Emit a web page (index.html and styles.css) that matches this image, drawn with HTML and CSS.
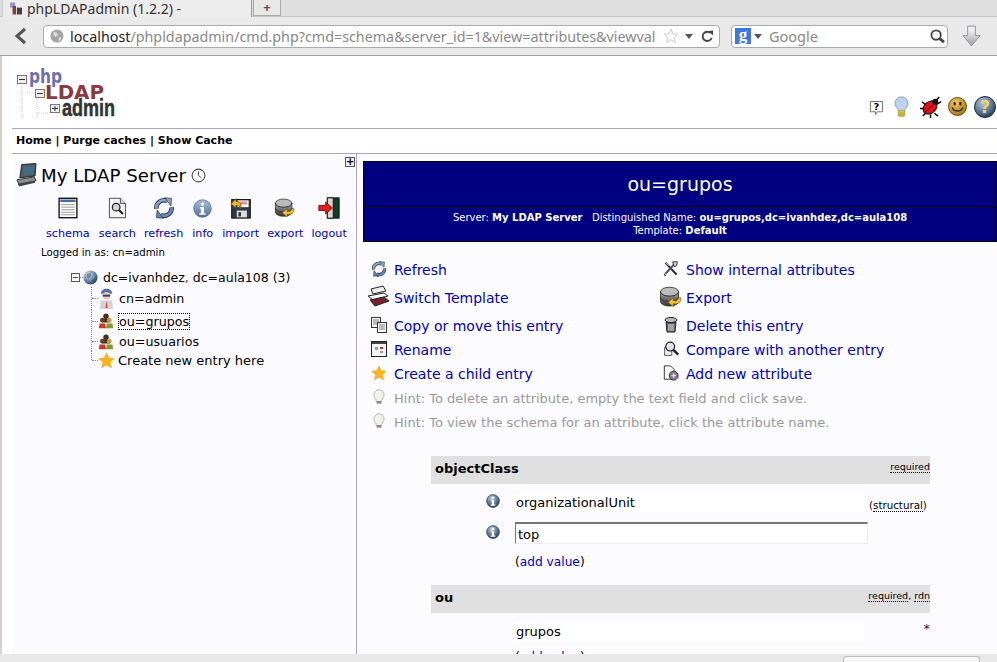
FILE: index.html
```html
<!DOCTYPE html>
<html lang="en">
<head>
    <meta charset="UTF-8">
    <meta name="viewport" content="width=device-width, initial-scale=1.0">
    <title>phpLDAPadmin (1.2.2)</title>
    <link rel="stylesheet" href="styles.css">
</head>
<body>
    <svg class="defs" width="0" height="0">
        <defs>
            <linearGradient id="g-steel" x1="0" y1="0" x2="0" y2="1"><stop offset="0" stop-color="#a9c0dc"/><stop offset="1" stop-color="#4f6f98"/></linearGradient>
            <linearGradient id="g-disk" x1="0" y1="0" x2="0" y2="1"><stop offset="0" stop-color="#aaa"/><stop offset="1" stop-color="#333"/></linearGradient>
            <linearGradient id="g-arrow" x1="0" y1="1" x2="0" y2="0"><stop offset="0" stop-color="#9a9ea2"/><stop offset=".8" stop-color="#eef1f1"/></linearGradient>
            <radialGradient id="g-globe" cx=".35" cy=".3" r=".8"><stop offset="0" stop-color="#dfeaf5"/><stop offset=".6" stop-color="#5c7fa8"/><stop offset="1" stop-color="#1d3352"/></radialGradient>
            <radialGradient id="g-smile" cx=".4" cy=".3" r=".8"><stop offset="0" stop-color="#f5c65a"/><stop offset="1" stop-color="#a06c10"/></radialGradient>
            <radialGradient id="g-dark" cx=".4" cy=".3" r=".8"><stop offset="0" stop-color="#b8cbe0"/><stop offset=".7" stop-color="#44607f"/><stop offset="1" stop-color="#16243a"/></radialGradient>
            <symbol id="i-info" viewBox="0 0 24 24"><circle cx="12" cy="12" r="11" fill="url(#g-steel)" stroke="#51688a"/><circle cx="12" cy="6.500" r="2" fill="#fff"/><path d="M9 10h5v8h2v2H8v-2h2v-6H9z" fill="#fff"/></symbol>
            <symbol id="i-info-dark" viewBox="0 0 24 24"><circle cx="12" cy="12" r="11" fill="url(#g-dark)" stroke="#223"/><circle cx="12" cy="6.500" r="2.200" fill="#fff"/><path d="M9 10h5v8h2v2H8v-2h2v-6H9z" fill="#fff"/></symbol>
            <symbol id="i-refresh" viewBox="0 0 32 32">
                <path d="M5 17A11 11 0 0 1 21 6" fill="none" stroke="#1d2a3c" stroke-width="6.500"/>
                <path d="M5 17A11 11 0 0 1 21 6" fill="none" stroke="#8aa6cc" stroke-width="4"/>
                <path d="M17 1l10 1-1 11z" fill="#8aa6cc" stroke="#1d2a3c"/>
                <path d="M27 15A11 11 0 0 1 11 26" fill="none" stroke="#1d2a3c" stroke-width="6.500"/>
                <path d="M27 15A11 11 0 0 1 11 26" fill="none" stroke="#6a8cb8" stroke-width="4"/>
                <path d="M15 31L5 30l1-11z" fill="#6a8cb8" stroke="#1d2a3c"/>
            </symbol>
            <symbol id="i-disk" viewBox="0 0 32 32"><ellipse cx="14" cy="9" rx="12" ry="6" fill="#bbb" stroke="#222"/><path d="M2 9v13c0 3 5 6 12 6s12-3 12-6V9c0 3-5 6-12 6S2 12 2 9z" fill="url(#g-disk)" stroke="#222"/><path d="M2 16c0 3 5 6 12 6s12-3 12-6" fill="none" stroke="#222"/><path d="M29 17c1 6-4 9-10 8v4l-7-6 7-6v4c4 1 7-1 7-4z" fill="#f1c33c" stroke="#7a5a08"/></symbol>
            <symbol id="i-star" viewBox="0 0 24 24"><path d="M12 1l3.300 7.400 7.700.8-5.800 5.300 1.700 7.900L12 18.300l-6.900 4.100 1.700-7.900L1 9.200l7.700-.8z" fill="#f8b419" stroke="#e5a010" stroke-width=".6"/></symbol>
            <symbol id="i-bulb" viewBox="0 0 20 24"><path d="M10 1a8 8 0 0 0-5 14c1 1 1 3 1 4h8c0-1 0-3 1-4a8 8 0 0 0-5-14z" fill="#f1f1ea" stroke="#999"/><rect x="6.500" y="18" width="7" height="4" fill="#888"/></symbol>
            <symbol id="i-group" viewBox="0 0 20 20"><circle cx="10" cy="4" r="3.400" fill="#4a2e1a"/><path d="M5 12l2-5h6l2 5z" fill="#2e2e2e"/><circle cx="5.500" cy="9" r="3" fill="#6b3b1c"/><path d="M1 19l1-6h7l1 6z" fill="#c93a20"/><circle cx="14" cy="9" r="3" fill="#c89a3a"/><path d="M10 19l1-6h7l1 6z" fill="#7f9a26"/></symbol>
        </defs>
    </svg>

    <div class="tabstrip">
        <div class="tab">
            <svg class="favicon" viewBox="0 0 14 16"><rect x="0" y="1" width="6" height="6" fill="#9a9ac8"/><rect x="3" y="5" width="4" height="10" fill="#8a3a3f"/><rect x="8" y="7" width="6" height="8" fill="#444"/></svg>
            <span>phpLDAPadmin (1.2.2) -</span>
        </div>
        <div class="newtab">+</div>
    </div>
    <div class="toolbar">
        <svg class="back" viewBox="0 0 14 18"><path d="M11 2L3 9l8 7" fill="none" stroke="#555" stroke-width="3"/></svg>
        <div class="urlbar">
            <svg class="urlglobe" viewBox="0 0 16 16"><circle cx="8" cy="8" r="7.500" fill="#a5a5a5"/><path d="M4 3l4 1 1 3-3 2-2-2zM10 10l3-1-1 4-2 1z" fill="#dcdcdc"/></svg>
            <div class="url"><span class="host">localhost</span>/phpldapadmin/cmd.php?cmd=schema&amp;server_id=1&amp;view=attributes&amp;viewval</div>
            <svg class="urlstar" viewBox="0 0 16 16"><path d="M8 1l2 4.800 5 .4-3.800 3.300 1.200 5L8 11.800 3.600 14.500l1.200-5L1 6.200l5-.4z" fill="#fff" stroke="#ccc"/></svg>
            <div class="caret"></div>
            <svg class="reload" viewBox="0 0 14 14"><path d="M11.500 8.500A5 5 0 1 1 10.500 3.500" fill="none" stroke="#444" stroke-width="2"/><path d="M8 1l5-.5V6z" fill="#444"/></svg>
        </div>
        <div class="searchbar">
            <div class="gbox">g</div>
            <div class="caret"></div>
            <div class="placeholder">Google</div>
            <svg class="glass" viewBox="0 0 16 16"><circle cx="6.500" cy="6.500" r="5" fill="none" stroke="#444" stroke-width="2"/><path d="M10 10l5 4" stroke="#444" stroke-width="3"/></svg>
        </div>
        <svg class="download" viewBox="0 0 20 24"><path d="M6 1h8v10h5l-9 11-9-11h5z" fill="url(#g-arrow)" stroke="#8e9698"/></svg>
    </div>

    <div class="page">
        <header class="head">
            <svg class="logo" viewBox="0 0 110 50" width="110" height="50">
                <path d="M5 12v36M19 27h4M20 27v20M20 42h13M10 22h8" stroke="#ccc" stroke-dasharray="1 1" fill="none"/>
                <rect x=".5" y="4.500" width="9" height="8" fill="#eee" stroke="#777"/><path d="M2 8.500h6" stroke="#333"/>
                <rect x="18.500" y="18.500" width="9" height="8" fill="#eee" stroke="#777"/><path d="M20 22.500h6" stroke="#333"/>
                <rect x="33.500" y="33.500" width="9" height="8" fill="#eee" stroke="#777"/><path d="M35 37.500h6M38 35v5" stroke="#333"/>
                <text x="12" y="12" class="logo-php" textLength="33" lengthAdjust="spacingAndGlyphs">php</text>
                <text x="28" y="28" class="logo-ldap" textLength="59" lengthAdjust="spacingAndGlyphs">LDAP</text>
                <text x="45" y="45" class="logo-admin" textLength="53" lengthAdjust="spacingAndGlyphs">admin</text>
            </svg>
            <div class="head-icons">
                <svg class="hi-bubble" viewBox="0 0 16 18"><path d="M1.500 1.500h13v11H9l-2 3v-3H1.500z" fill="#fff" stroke="#666"/><text x="8" y="10.500" class="bubble-q">?</text></svg>
                <svg class="hi-bulb" viewBox="0 0 16 24"><path d="M8 1a7 7 0 0 0-5 12c1 1 2 2 2 4h6c0-2 1-3 2-4A7 7 0 0 0 8 1z" fill="#bcd4ee" stroke="#7e9ec4"/><rect x="4.500" y="16" width="7" height="6" rx="1" fill="#e6d360" stroke="#a99720"/><path d="M5 18.500h6M5 20.500h6" stroke="#a99720"/></svg>
                <svg class="hi-bug" viewBox="0 0 24 24"><path d="M3 7l5 4M1 14h6M4 22l5-5M21 2l-5 6M23 7l-5 3M16 19l4 3M12 20v4" stroke="#000" stroke-width="1.500"/><ellipse cx="11.500" cy="13" rx="8" ry="6" fill="#e0101c" stroke="#000" transform="rotate(-40 11.500 13)"/><path d="M6 18L17 8" stroke="#600"/><circle cx="17" cy="7" r="3" fill="#111"/></svg>
                <svg class="hi-round" viewBox="0 0 20 20"><circle cx="10" cy="10" r="9.500" fill="url(#g-smile)" stroke="#6b4a0c"/><ellipse cx="7" cy="7" rx="1.200" ry="2" fill="#222"/><ellipse cx="13" cy="7" rx="1.200" ry="2" fill="#222"/><path d="M4.500 11c1 5 10 5 11 0" fill="none" stroke="#222" stroke-width="1.300"/></svg>
                <svg class="hi-help" viewBox="0 0 22 22"><circle cx="11" cy="11" r="10.500" fill="url(#g-dark)" stroke="#1b2b40"/><text x="11" y="17" class="help-q">?</text></svg>
            </div>
        </header>
        <nav class="topnav">Home | Purge caches | Show Cache</nav>

        <main class="main">
            <aside class="side">
                <div class="side-expand"><span class="plusbox">+</span></div>
                <div class="server-row">
                    <svg class="server-ic" viewBox="0 0 22 24"><path d="M6 1l15-1-1 13-16 2z" fill="#54585e" stroke="#222"/><path d="M8 3l11-1-1 9-11 1z" fill="#3e6f86"/><path d="M1 17l18-3 2 4-18 4z" fill="#8b8f92" stroke="#333"/><path d="M2 21l18-3v2L3 24z" fill="#444"/></svg>
                    <h2 class="server-name">My LDAP Server</h2>
                    <svg class="clock" viewBox="0 0 16 16"><circle cx="8" cy="8" r="6.800" fill="#fff" stroke="#444" stroke-width="1.100"/><path d="M8 3.500V8l3 2.500" fill="none" stroke="#444"/></svg>
                </div>
                <div class="tools">
                    <a class="tool tool-schema"><svg viewBox="0 0 24 26"><rect x="1.500" y="1.500" width="21" height="23" fill="#fff" stroke="#000" stroke-width="1.500"/><rect x="3" y="3" width="18" height="3" fill="#4a6a9a"/><path d="M4 9h16M4 12h16M4 15h16M4 18h16M4 21h16" stroke="#888"/></svg><span>schema</span></a>
                    <a class="tool tool-search"><svg viewBox="0 0 24 26"><path d="M3 1.500h13l6 6v17H3z" fill="#f4f4f4" stroke="#333"/><path d="M16 1.500v6h6" fill="#ddd" stroke="#333"/><circle cx="11" cy="12" r="4.500" fill="#cfd8e2" stroke="#222" stroke-width="1.500"/><path d="M14 15l5 5" stroke="#222" stroke-width="2.500"/></svg><span>search</span></a>
                    <a class="tool tool-refresh"><svg viewBox="0 0 32 32"><use href="#i-refresh"/></svg><span>refresh</span></a>
                    <a class="tool tool-info"><svg viewBox="0 0 24 24"><use href="#i-info"/></svg><span>info</span></a>
                    <a class="tool tool-import"><svg viewBox="0 0 26 26"><rect x="2" y="3" width="22" height="22" fill="#2f3a48" stroke="#000"/><rect x="9" y="4" width="13" height="8" fill="#fff"/><path d="M11 6h9M11 8h9" stroke="#c33"/><rect x="8" y="16" width="12" height="8" fill="#ddd"/><rect x="10" y="18" width="3" height="5" fill="#333"/><path d="M1 8l6-6v3c4 0 7 3 6 9-1-3-3-4-6-4v3z" fill="#e8b830" stroke="#6b5008"/></svg><span>import</span></a>
                    <a class="tool tool-export"><svg viewBox="0 0 32 32"><use href="#i-disk"/></svg><span>export</span></a>
                    <a class="tool tool-logout"><svg viewBox="0 0 26 26"><rect x="11" y="1" width="14" height="24" fill="#123c2a" stroke="#000"/><path d="M11 1h7v24h-7z" fill="#d8d8c8" stroke="#000"/><path d="M1 10h8V6l8 7-8 7v-4H1z" fill="#e02020" stroke="#700"/></svg><span>logout</span></a>
                </div>
                <p class="logged">Logged in as: cn=admin</p>
                <div class="tree">
                    <div class="tree-root">
                        <span class="minusbox"></span><span class="root-joint"></span>
                        <svg class="globe" viewBox="0 0 16 16"><circle cx="8" cy="8" r="7.500" fill="url(#g-globe)"/><path d="M4 4l4-1 1 3-3 3-2-1zM10 10l3-1-1 3-2 1z" fill="#2c4a30" opacity=".5"/></svg>
                        <span class="root-label">dc=ivanhdez<i class="comma">,</i> dc=aula108 (3)</span>
                    </div>
                    <ul class="tree-list">
                        <li class="tree-item item-a"><span class="joint"></span><svg class="node-ic user-ic" viewBox="0 0 18 22"><path d="M3 6c0-7 12-7 12 0z" fill="#4f6fb0"/><circle cx="9" cy="8" r="4" fill="#f0c8a8"/><path d="M5 7h8v2H5z" fill="#2f3f70"/><path d="M2 22l1-9h12l1 9z" fill="#d4d4d4"/><path d="M9 13l-1 8h2z" fill="#c33"/></svg><span>cn=admin</span></li>
                        <li class="tree-item item-b"><span class="joint"></span><svg class="node-ic" viewBox="0 0 20 20"><use href="#i-group"/></svg><span class="focused">ou=grupos</span></li>
                        <li class="tree-item item-c"><span class="joint"></span><svg class="node-ic" viewBox="0 0 20 20"><use href="#i-group"/></svg><span>ou=usuarios</span></li>
                        <li class="tree-item item-d"><span class="joint"></span><svg class="node-ic star-ic" viewBox="0 0 24 24"><use href="#i-star"/></svg><span class="create-label">Create new entry here</span></li>
                    </ul>
                </div>
            </aside>

            <section class="content">
                <div class="entry-head">
                    <div class="entry-title">ou=grupos</div>
                    <div class="entry-sub">
                        <div>Server: <b>My LDAP Server</b> &nbsp; Distinguished Name: <b>ou=grupos,dc=ivanhdez,dc=aula108</b></div>
                        <div>Template: <b>Default</b></div>
                    </div>
                </div>

                <div class="actions">
                    <a class="action"><span class="a-ic"><svg class="s16" viewBox="0 0 32 32"><use href="#i-refresh"/></svg></span>Refresh</a>
                    <a class="action"><span class="a-ic"><svg class="s16" viewBox="0 0 20 20"><path d="M3 2l14 15" stroke="#222" stroke-width="2.600"/><path d="M3 2l4 4" stroke="#eee" stroke-width="1"/><path d="M15 3L3 16" stroke="#555" stroke-width="2.600"/><path d="M12 1l6 0-1 5-3 1z" fill="#ccc" stroke="#222"/><path d="M1 15l3 3 -2 1z" fill="#222"/></svg></span>Show internal attributes</a>

                    <a class="action"><span class="a-ic"><svg class="s24" viewBox="0 0 24 24"><path d="M4 4l12-3 3 5-13 3z" fill="#eee" stroke="#222"/><path d="M1 11l16-3 4 3-15 4z" fill="#fff" stroke="#222"/><path d="M3 15l14-3 5 4-14 5z" fill="#7d1f2a" stroke="#222"/></svg></span>Switch Template</a>
                    <a class="action"><span class="a-ic"><svg class="s24" viewBox="0 0 32 32"><use href="#i-disk"/></svg></span>Export</a>

                    <a class="action"><span class="a-ic"><svg class="s16" viewBox="0 0 16 16"><rect x=".5" y=".5" width="9" height="10" fill="#fff" stroke="#333"/><path d="M2 3h6M2 5h6M2 7h6" stroke="#777"/><rect x="6.500" y="5.500" width="9" height="10" fill="#fff" stroke="#333"/><path d="M8 8h6M8 10h6M8 12h6" stroke="#777"/></svg></span>Copy or move this entry</a>
                    <a class="action"><span class="a-ic"><svg class="s16" viewBox="0 0 16 16"><ellipse cx="8" cy="3" rx="6" ry="2.500" fill="#bbb" stroke="#222"/><path d="M3 5l1 10h8l1-10c-2 1-8 1-10 0z" fill="#666" stroke="#222"/><path d="M6 7v7M8 7v7M10 7v7" stroke="#ddd"/></svg></span>Delete this entry</a>

                    <a class="action"><span class="a-ic"><svg class="s16 rename-ic" viewBox="0 0 16 16"><rect x=".5" y=".5" width="15" height="15" fill="#f4f4f4" stroke="#222"/><rect x="1" y="1" width="14" height="2" fill="#444"/><path d="M4 6h3v3H4zM9 10h3v2H9z" fill="#999"/><path d="M9 6h3v2H9z" fill="#c33"/></svg></span>Rename</a>
                    <a class="action"><span class="a-ic"><svg class="s16" viewBox="0 0 20 20"><path d="M2 8v10h9V8z" fill="#eee" stroke="#333"/><circle cx="9" cy="7" r="5.500" fill="#dfe6ee" stroke="#222" stroke-width="1.500"/><path d="M13 11l6 6" stroke="#222" stroke-width="3"/></svg></span>Compare with another entry</a>

                    <a class="action"><span class="a-ic"><svg class="s16" viewBox="0 0 24 24"><use href="#i-star"/></svg></span>Create a child entry</a>
                    <a class="action"><span class="a-ic"><svg class="s16" viewBox="0 0 18 18"><path d="M1.500 1h7l4 4v11h-11z" fill="#fff" stroke="#222"/><circle cx="12" cy="12" r="5" fill="#8a7a9a" stroke="#222"/><path d="M12 9.500v5M9.500 12h5" stroke="#fff"/></svg></span>Add new attribute</a>

                    <div class="hint"><span class="a-ic"><svg class="s16" viewBox="0 0 20 24"><use href="#i-bulb"/></svg></span>Hint: To delete an attribute, empty the text field and click save.</div>
                    <div class="hint"><span class="a-ic"><svg class="s16" viewBox="0 0 20 24"><use href="#i-bulb"/></svg></span>Hint: To view the schema for an attribute, click the attribute name.</div>
                </div>

                <div class="attrs">
                    <div class="attr-head">
                        <span class="attr-name">objectClass</span>
                        <span class="attr-flags"><u>required</u></span>
                    </div>
                    <div class="value-row first">
                        <svg class="val-info" viewBox="0 0 24 24"><use href="#i-info-dark"/></svg>
                        <div class="value">organizationalUnit</div>
                        <span class="value-note">(<u>structural</u>)</span>
                    </div>
                    <div class="value-row second">
                        <svg class="val-info" viewBox="0 0 24 24"><use href="#i-info-dark"/></svg>
                        <div class="value editing">top</div>
                    </div>
                    <div class="add-value">(<a>add value</a>)</div>

                    <div class="attr-head">
                        <span class="attr-name">ou</span>
                        <span class="attr-flags"><u>required</u>, <u>rdn</u></span>
                    </div>
                    <div class="value-row first plain">
                        <div class="value">grupos</div>
                        <span class="value-star">*</span>
                    </div>
                    <div class="add-value">(<a>add value</a>)</div>
                </div>
            </section>
        </main>
    </div>

    <div class="statusbar"><div class="status-box"></div></div>
</body>
</html>
```

FILE: styles.css
```css
html, body {
    height: 100%;
}
body {
    margin: 0;
    height: 662px;
    overflow: hidden;
    display: flex;
    flex-direction: column;
    font-family: "DejaVu Sans", sans-serif;
    background-color: #fff;
    color: #000;
}
.defs {
    display: block;
    height: 0;
}
svg {
    display: block;
    flex: none;
}
a {
    color: #0000c0;
}

/* browser chrome */
.tabstrip {
    display: flex;
    height: 17px;
    background-color: #dfdfdf;
    font-family: "Noto Sans", sans-serif;
    font-size: 14px;
    color: #333;
    border-bottom: 1px solid #c4c4c4;
    box-sizing: border-box;
    flex: none;
}
.tab {
    display: flex;
    align-items: center;
    gap: 5px;
    width: 250px;
    height: 17px;
    margin-left: 2px;
    padding-left: 7px;
    box-sizing: border-box;
    background-color: #ececec;
    border-right: 1px solid #999;
    border-left: 1px solid #ccc;
}
.favicon {
    width: 12px;
    height: 15px;
}
.newtab {
    width: 28px;
    margin-left: 1px;
    height: 16px;
    line-height: 14px;
    text-align: center;
    font-size: 13px;
    font-weight: bold;
    color: #555;
    background-color: #e8e8e8;
    border: 1px solid #aaa;
    border-top: 0;
    box-sizing: border-box;
}
.toolbar {
    display: flex;
    align-items: center;
    height: 39px;
    padding: 0 0 0 2px;
    box-sizing: border-box;
    background-color: #e9e9e9;
    border-bottom: 1px solid #a5a5a5;
    font-family: "Noto Sans", sans-serif;
    flex: none;
}
.back {
    width: 14px;
    height: 18px;
    margin-left: 12px;
}
.urlbar, .searchbar {
    display: flex;
    align-items: center;
    height: 23px;
    box-sizing: border-box;
    background-color: #fff;
    border: 1px solid #aaa;
    border-radius: 4px;
}
.urlbar {
    width: 677px;
    margin-left: 15px;
    padding-left: 6px;
}
.urlglobe {
    width: 14px;
    height: 14px;
}
.url {
    width: 588px;
    margin-left: 6px;
    font-size: 14.3px;
    color: #888;
    white-space: nowrap;
}
.host {
    color: #222;
}
.urlstar {
    width: 16px;
    height: 16px;
    margin-left: 5px;
}
.caret {
    width: 0;
    height: 0;
    border-left: 4px solid transparent;
    border-right: 4px solid transparent;
    border-top: 5px solid #555;
}
.urlbar .caret {
    margin-left: 6px;
}
.reload {
    width: 13px;
    height: 13px;
    margin-left: 8px;
}
.searchbar {
    width: 217px;
    margin-left: 11px;
    padding-left: 3px;
}
.gbox {
    width: 16px;
    height: 16px;
    line-height: 13px;
    text-align: center;
    background-color: #3c78e0;
    color: #fff;
    font-family: "Liberation Serif", serif;
    font-size: 17px;
    font-weight: bold;
}
.searchbar .caret {
    margin-left: 3px;
}
.placeholder {
    width: 161px;
    margin-left: 7px;
    font-size: 14.5px;
    color: #888;
}
.glass {
    width: 15px;
    height: 15px;
}
.download {
    width: 19px;
    height: 23px;
    margin-left: 14px;
}

/* page */
.page {
    flex: 1;
    min-height: 0;
    overflow: hidden;
    margin-left: 2px;
    padding-left: 10px;
    box-shadow: -2px 0 0 #d6d2ca;
}
.head {
    display: flex;
    justify-content: space-between;
    align-items: flex-end;
    height: 73px;
    box-sizing: border-box;
    border-bottom: 1px solid #aaa8c8;
    padding-left: 5px;
}
.logo {
    margin-bottom: 7px;
    overflow: visible;
}
.logo-php {
    font: bold 19px "DejaVu Sans", sans-serif;
    fill: #6a70ae;
}
.logo-ldap {
    font: bold 19px "DejaVu Sans", sans-serif;
    fill: #8a3a40;
}
.logo-admin {
    font: bold 24px "Liberation Sans", sans-serif;
    fill: #333;
    stroke: #333;
    stroke-width: .5px;
}
.head-icons {
    display: flex;
    align-items: flex-end;
    padding-right: 1px;
    margin-bottom: 10px;
}
.hi-bubble {
    width: 15px;
    height: 17px;
    margin-right: 10px;
    margin-bottom: 1px;
}
.bubble-q {
    font: bold 10px "DejaVu Sans", sans-serif;
    text-anchor: middle;
}
.hi-bulb {
    width: 15px;
    height: 22px;
    margin-right: 10px;
}
.hi-bug {
    width: 23px;
    height: 23px;
    margin-right: 6px;
}
.hi-round {
    width: 19px;
    height: 19px;
    margin-right: 7px;
    margin-bottom: 2px;
}
.hi-help {
    width: 22px;
    height: 22px;
}
.help-q {
    font: bold 17px "DejaVu Sans", sans-serif;
    fill: #f1d65c;
    text-anchor: middle;
}
.topnav {
    height: 24px;
    line-height: 24px;
    padding-left: 4px;
    font-size: 11px;
    font-weight: bold;
    border-bottom: 1px solid #aaa8c8;
}
.main {
    display: grid;
    grid-template-columns: 345px 1fr;
    height: 510px;
}

/* left column */
.side {
    background-color: #fbfbff;
    border-right: 1px solid #aaa8c8;
}
.side-expand {
    display: flex;
    justify-content: flex-end;
    height: 10px;
    padding: 3px 1px 0 0;
}
.plusbox {
    width: 8px;
    height: 8px;
    line-height: 7px;
    text-align: center;
    font-size: 10px;
    font-weight: bold;
    background-color: #eee;
    border: 1px solid #555;
}
.server-row {
    display: flex;
    align-items: center;
    height: 26px;
    margin-top: -5px;
    padding-left: 4px;
}
.server-ic {
    width: 21px;
    height: 24px;
}
.server-name {
    margin: 0 0 0 4px;
    font-size: 18.2px;
    font-weight: normal;
}
.clock {
    width: 15px;
    height: 15px;
    margin-left: 5px;
}
.tools {
    display: flex;
    height: 44px;
    margin-top: 9px;
    font-size: 11.2px;
}
.tool {
    display: flex;
    flex-direction: column;
    align-items: center;
    justify-content: space-between;
    height: 43px;
}
.tool svg {
    width: 22px;
    height: 22px;
}
.tool-info svg {
    width: 19px;
    height: 19px;
    margin-top: 2px;
}
.tool-schema { margin-left: 34px; }
.tool-search { margin-left: 9px; }
.tool-refresh { margin-left: 8px; }
.tool-info { margin-left: 9px; }
.tool-import { margin-left: 9px; }
.tool-export { margin-left: 8px; }
.tool-logout { margin-left: 8px; }
.logged {
    margin: 5px 0 0 29px;
    font-size: 10.2px;
    line-height: 14px;
}
.tree {
    margin: 8px 0 0 59px;
    font-size: 12.7px;
}
.tree-root {
    display: flex;
    align-items: center;
    height: 19px;
}
.minusbox {
    width: 7px;
    height: 7px;
    border: 1px solid #555;
    background: linear-gradient(#555, #555) center / 5px 1px no-repeat;
}
.root-joint {
    width: 3px;
    border-bottom: 1px dotted #888;
}
.globe {
    width: 15px;
    height: 15px;
}
.root-label {
    margin-left: 5px;
    font-size: 12.5px;
}
.comma {
    color: #e00;
    font-style: normal;
}
.tree-list {
    list-style: none;
    margin: 0 0 0 20px;
    padding: 0;
}
.tree-item {
    display: flex;
    align-items: center;
    background: repeating-linear-gradient(#888 0 1px, transparent 1px 2px) left top / 1px 100% no-repeat;
}
.item-a { height: 23px; }
.item-b { height: 22px; }
.item-c { height: 19px; }
.item-d {
    height: 19px;
    background-size: 1px 50%;
}
.joint {
    width: 6px;
    margin-left: 1px;
    border-bottom: 1px dotted #888;
}
.node-ic {
    width: 16px;
    height: 18px;
    margin-right: 5px;
}
.user-ic {
    width: 17px;
    height: 21px;
    margin-right: 4px;
}
.star-ic {
    width: 17px;
    height: 17px;
    margin-right: 3px;
}
.create-label {
    font-size: 13px;
}
.focused {
    outline: 1px dotted #000;
}

/* right column */
.content {
    padding: 7px 0 0 6px;
    background-color: #fcfcff;
}
.entry-head {
    background-color: #000080;
    border: 1px solid #000;
    color: #fff;
    text-align: center;
    height: 81px;
    box-sizing: border-box;
}
.entry-title {
    height: 44px;
    line-height: 44px;
    font-size: 19px;
    border-bottom: 1px solid #000;
}
.entry-sub {
    padding-top: 4px;
    font-size: 10px;
    line-height: 13px;
}
.actions {
    display: grid;
    grid-template-columns: 292px 1fr;
    grid-template-rows: 24px 32px 24px 24px 24px 24px 24px;
    margin-top: 16px;
    font-size: 14px;
}
.action {
    display: flex;
    align-items: center;
}
.a-ic {
    display: flex;
    justify-content: center;
    width: 31px;
}
.s16 {
    width: 16px;
    height: 16px;
    margin-bottom: 3px;
}
.s24 {
    width: 24px;
    height: 24px;
    margin-bottom: 2px;
}
.hint {
    grid-column: 1 / 3;
    display: flex;
    align-items: center;
    font-size: 13px;
    color: #999;
}
.attrs {
    width: 499px;
    margin: 22px 0 0 68px;
}
.attr-head {
    display: flex;
    justify-content: space-between;
    height: 28px;
    padding: 0 0 0 4px;
    background-color: #e0e0e0;
}
.attr-name {
    font-size: 13px;
    font-weight: bold;
    line-height: 26px;
}
.attr-flags {
    font-size: 9.5px;
    line-height: 22px;
}
u {
    text-decoration: none;
    border-bottom: 1px dotted #000;
}
.value-row {
    display: flex;
    align-items: flex-start;
}
.value-row.first {
    margin-top: 9px;
    height: 29px;
}
.value-row.second {
    height: 32px;
}
.value-row.second .val-info {
    margin-top: 3px;
}
.value-row.plain {
    padding-left: 84px;
    height: 27px;
}
.val-info {
    width: 14px;
    height: 14px;
    margin: 1px 15px 0 55px;
}
.value {
    width: 349px;
    height: 19px;
    line-height: 20px;
    font-size: 13px;
    padding-left: 1px;
    box-sizing: border-box;
    background-color: #fff;
}
.value.editing {
    width: 353px;
    height: 22px;
    line-height: 21px;
    padding-left: 2px;
    border-top: 2px solid #777;
    border-left: 1px solid #777;
    border-right: 1px solid #eee;
    border-bottom: 1px solid #eee;
}
.value-note {
    margin-left: 5px;
    font-size: 10.3px;
    line-height: 24px;
}
.value-star {
    margin-left: 60px;
    font-size: 13px;
    line-height: 14px;
    color: #224;
}
.add-value {
    height: 31px;
    padding-left: 84px;
    font-size: 12.2px;
    line-height: 17px;
}

/* bottom strip of the browser window */
.statusbar {
    display: flex;
    justify-content: flex-end;
    height: 8px;
    margin-top: -8px;
    padding-top: 2px;
    box-sizing: border-box;
    background-color: #e8e8e8;
    position: relative;
    flex: none;
}
.status-box {
    width: 137px;
    margin-right: 17px;
    background-color: #f6f6f6;
    border: 1px solid #bbb;
    border-bottom: 0;
    border-radius: 3px 3px 0 0;
    box-sizing: border-box;
}
```
